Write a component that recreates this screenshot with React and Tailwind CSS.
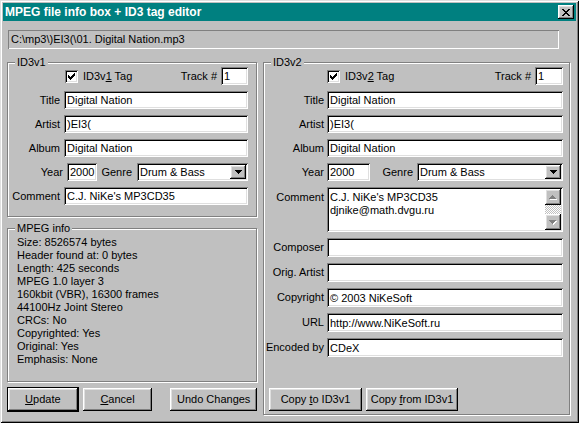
import React from "react";

const sunken =
  "bg-white shadow-[inset_1px_1px_0_#808080,inset_-1px_-1px_0_#ffffff,inset_2px_2px_0_#000000,inset_-2px_-2px_0_#dfdfdf]";
const raised =
  "bg-[#c0c0c0] shadow-[inset_-1px_-1px_0_#000000,inset_1px_1px_0_#ffffff,inset_-2px_-2px_0_#808080,inset_2px_2px_0_#dfdfdf]";

function Pix({ rows, color = "#000" }) {
  const rects = [];
  rows.forEach((r, y) => {
    for (let x = 0; x < r.length; x++)
      if (r[x] === "X") rects.push(<rect key={x + "-" + y} x={x} y={y} width={1} height={1} />);
  });
  const w = rows[0].length;
  const h = rows.length;
  return (
    <svg width={w} height={h} viewBox={`0 0 ${w} ${h}`} shapeRendering="crispEdges" fill={color} className="block">
      {rects}
    </svg>
  );
}

const CLOSE = ["XX....XX", ".XX..XX.", "..XXXX..", "...XX...", "..XXXX..", ".XX..XX.", "XX....XX"];
const CHECK = ["......X", ".....XX", "X...XXX", "XX.XXX.", "XXXXX..", ".XXX...", "..X...."];
const DOWN = ["XXXXXXX", ".XXXXX.", "..XXX..", "...X..."];
const UP = ["...X...", "..XXX..", ".XXXXX.", "XXXXXXX"];

function Field({ value, className = "" }) {
  return (
    <div className={`${sunken} h-[18px] flex items-center pl-[3px] pt-[1px] whitespace-nowrap overflow-hidden ${className}`}>
      {value}
    </div>
  );
}

function Combo({ value, className = "" }) {
  return (
    <div className={`${sunken} h-[18px] flex items-center p-[2px] ${className}`}>
      <div className="flex-1 pl-[1px] pt-[1px] whitespace-nowrap">{value}</div>
      <div className={`${raised} w-[16px] h-[14px] flex items-center justify-center`}>
        <Pix rows={DOWN} />
      </div>
    </div>
  );
}

function Check() {
  return (
    <div className={`${sunken} w-[13px] h-[13px] flex items-center justify-center shrink-0`}>
      <Pix rows={CHECK} />
    </div>
  );
}

function DisabledArrow({ rows }) {
  return (
    <div className="relative w-[8px] h-[5px]">
      <div className="absolute left-[1px] top-[1px]">
        <Pix rows={rows} color="#ffffff" />
      </div>
      <div className="absolute left-0 top-0">
        <Pix rows={rows} color="#808080" />
      </div>
    </div>
  );
}

function Group({ title, className = "", children }) {
  return (
    <div className={`relative border border-[#808080] shadow-[inset_1px_1px_0_#ffffff,1px_1px_0_#ffffff] ${className}`}>
      <span className="absolute left-[7px] top-[-7px] px-[2px] bg-[#c0c0c0] leading-[13px]">{title}</span>
      {children}
    </div>
  );
}

function Row({ label, labelW, gap, children, h = "h-[18px]" }) {
  return (
    <div className={`flex items-center ${h}`}>
      <div className="text-right shrink-0" style={{ width: labelW, marginRight: gap }}>
        {label}
      </div>
      {children}
    </div>
  );
}

function Button({ children, className = "" }) {
  return (
    <div className={`${raised} h-[23px] flex items-center justify-center ${className}`}>{children}</div>
  );
}

export default function App() {
  return (
    <div className="w-[579px] h-[423px] bg-[#c0c0c0] p-[3px] flex flex-col text-[11px] leading-[13px] text-black font-['Liberation_Sans',Arial,sans-serif] shadow-[inset_1px_1px_0_#dfdfdf,inset_-1px_-1px_0_#000000,inset_2px_2px_0_#ffffff,inset_-2px_-2px_0_#808080]">
      {/* Title bar */}
      <div className="h-[18px] bg-[#008080] flex items-center justify-between pl-[2px] pr-[2px] shrink-0">
        <span className="text-white font-bold text-[12px] leading-[14px]">MPEG file info box + ID3 tag editor</span>
        <div className={`${raised} w-[16px] h-[14px] flex items-center justify-center`}>
          <Pix rows={CLOSE} />
        </div>
      </div>

      <div className="flex-1 flex flex-col pl-[4px] pr-[6px]">
        {/* Path */}
        <div className="mt-[9px] ml-[1px] w-[551px] h-[19px] shrink-0 flex items-center pl-[3px] shadow-[inset_1px_1px_0_#808080,inset_-1px_-1px_0_#ffffff]">
          {"C:\\mp3\\)EI3(\\01. Digital Nation.mp3"}
        </div>

        <div className="mt-[13px] flex gap-[6px]">
          {/* Left column */}
          <div className="w-[250px] flex flex-col">
            <Group title="ID3v1" className="h-[155px]">
              <div className="flex flex-col gap-[6px] pt-[4px] pr-[8px]">
                <div className="flex items-center h-[18px]">
                  <div className="ml-[57px]">
                    <Check />
                  </div>
                  <span className="ml-[5px]">
                    ID3v<span className="underline">1</span> Tag
                  </span>
                  <div className="flex-1" />
                  <span className="mr-[4px]">Track #</span>
                  <Field value="1" className="w-[27px]" />
                </div>
                <Row label="Title" labelW={52} gap={4}>
                  <Field value="Digital Nation" className="flex-1" />
                </Row>
                <Row label="Artist" labelW={52} gap={4}>
                  <Field value=")EI3(" className="flex-1" />
                </Row>
                <Row label="Album" labelW={52} gap={4}>
                  <Field value="Digital Nation" className="flex-1" />
                </Row>
                <div className="flex items-center h-[18px]">
                  <div className="w-[55px] text-right mr-[4px]">Year</div>
                  <Field value="2000" className="w-[30px]" />
                  <div className="flex-1 text-right pr-[5px]">Genre</div>
                  <Combo value="Drum & Bass" className="w-[111px]" />
                </div>
                <Row label="Comment" labelW={52} gap={4}>
                  <Field value="C.J. NiKe's MP3CD35" className="flex-1" />
                </Row>
              </div>
            </Group>

            <Group title="MPEG info" className="h-[154px] mt-[11px]">
              <div className="pl-[9px] pt-[7px] leading-[13px]">
                <div>Size: 8526574 bytes</div>
                <div>Header found at: 0 bytes</div>
                <div>Length: 425 seconds</div>
                <div>MPEG 1.0 layer 3</div>
                <div>160kbit (VBR), 16300 frames</div>
                <div>44100Hz Joint Stereo</div>
                <div>CRCs: No</div>
                <div>Copyrighted: Yes</div>
                <div>Original: Yes</div>
                <div>Emphasis: None</div>
              </div>
            </Group>

            <div className="mt-[5px] flex items-center h-[25px]">
              <div className="border border-black w-[72px] h-[25px] flex">
                <Button className="flex-1">
                  <span>
                    <span className="underline">U</span>pdate
                  </span>
                </Button>
              </div>
              <Button className="w-[70px] ml-[4px]">
                <span>
                  <span className="underline">C</span>ancel
                </span>
              </Button>
              <Button className="w-[87px] ml-[18px]">Undo Changes</Button>
            </div>
          </div>

          {/* Right column */}
          <Group title="ID3v2" className="w-[307px] h-[353px] flex flex-col">
            <div className="flex flex-col gap-[6px] pt-[4px] pr-[6px]">
              <div className="flex items-center h-[18px]">
                <div className="ml-[63px]">
                  <Check />
                </div>
                <span className="ml-[5px]">
                  ID3v<span className="underline">2</span> Tag
                </span>
                <div className="flex-1" />
                <span className="mr-[4px]">Track #</span>
                <Field value="1" className="w-[28px]" />
              </div>
              <Row label="Title" labelW={60} gap={3}>
                <Field value="Digital Nation" className="flex-1" />
              </Row>
              <Row label="Artist" labelW={60} gap={3}>
                <Field value=")EI3(" className="flex-1" />
              </Row>
              <Row label="Album" labelW={60} gap={3}>
                <Field value="Digital Nation" className="flex-1" />
              </Row>
              <div className="flex items-center h-[18px]">
                <div className="w-[60px] text-right mr-[3px]">Year</div>
                <Field value="2000" className="w-[43px]" />
                <div className="flex-1 text-right pr-[4px]">Genre</div>
                <Combo value="Drum & Bass" className="w-[146px]" />
              </div>
              <div className="flex items-start h-[45px]">
                <div className="w-[60px] text-right mr-[3px] pt-[4px]">Comment</div>
                <div className={`${sunken} flex-1 h-[45px] flex p-[2px]`}>
                  <div className="flex-1 pl-[1px] pt-[2px] leading-[13px]">
                    <div>C.J. NiKe's MP3CD35</div>
                    <div>djnike@math.dvgu.ru</div>
                  </div>
                  <div className="w-[16px] flex flex-col">
                    <div className={`${raised} h-[16px] flex items-center justify-center`}>
                      <DisabledArrow rows={UP} />
                    </div>
                    <div className="flex-1 bg-[repeating-conic-gradient(#ffffff_0_25%,#c0c0c0_0_50%)] bg-[length:2px_2px]" />
                    <div className={`${raised} h-[16px] flex items-center justify-center`}>
                      <DisabledArrow rows={DOWN} />
                    </div>
                  </div>
                </div>
              </div>
              <Row label="Composer" labelW={60} gap={3} h="h-[19px]">
                <Field value="" className="flex-1 h-[19px]" />
              </Row>
              <Row label="Orig. Artist" labelW={60} gap={3} h="h-[19px]">
                <Field value="" className="flex-1 h-[19px]" />
              </Row>
              <Row label="Copyright" labelW={60} gap={3} h="h-[19px]">
                <Field value="© 2003 NiKeSoft" className="flex-1 h-[19px]" />
              </Row>
              <Row label="URL" labelW={60} gap={3} h="h-[19px]">
                <Field value="http://www.NiKeSoft.ru" className="flex-1 h-[19px]" />
              </Row>
              <Row label="Encoded by" labelW={60} gap={3} h="h-[19px]">
                <Field value="CDeX" className="flex-1 h-[19px]" />
              </Row>
            </div>
            <div className="mt-auto flex pb-[3px] pl-[5px]">
              <Button className="w-[93px]">
                <span>
                  Copy <span className="underline">t</span>o ID3v1
                </span>
              </Button>
              <Button className="w-[92px] ml-[4px]">
                <span>
                  Copy <span className="underline">f</span>rom ID3v1
                </span>
              </Button>
            </div>
          </Group>
        </div>
      </div>
    </div>
  );
}
